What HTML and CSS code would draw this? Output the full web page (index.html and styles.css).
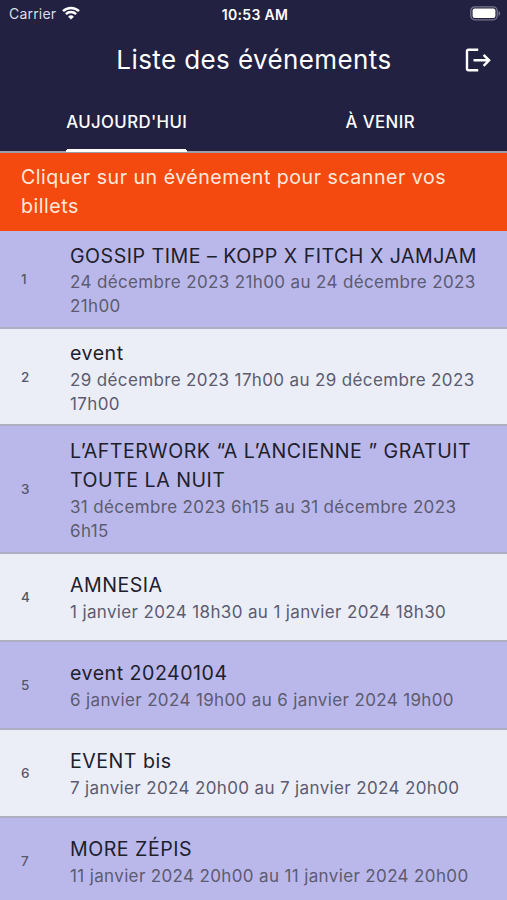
FILE: index.html
```html
<!DOCTYPE html>
<html lang="fr">
<head>
    <meta charset="UTF-8">
    <meta name="viewport" content="width=device-width, initial-scale=1.0">
    <title>Liste des événements</title>
    <link rel="stylesheet" href="styles.css">
</head>
<body>
    <header class="header">
        <div class="status-bar">
            <div class="carrier">
                <span>Carrier</span>
                <svg class="wifi" viewBox="0 0 18 14" width="18" height="14">
                    <path d="M1 5.2a11.5 11.5 0 0 1 16 0M3.9 8.2a7.3 7.3 0 0 1 10.2 0" fill="none" stroke="#fff" stroke-width="2.5"/>
                    <path d="M9 13.6 6.1 10.7a4.2 4.2 0 0 1 5.8 0z" fill="#fff"/>
                </svg>
            </div>
            <span class="time">10:53 AM</span>
            <svg class="battery" viewBox="0 0 31 15" width="31" height="15">
                <rect x="0.8" y="0.8" width="26.4" height="13" rx="4" fill="none" stroke="#77768a" stroke-width="1.3"/>
                <rect x="2.6" y="2.6" width="22.8" height="9.4" rx="2" fill="#fff"/>
                <path d="M28.6 5v4.8c2.1-.8 2.1-4 0-4.8z" fill="#77768a"/>
            </svg>
        </div>
        <div class="app-bar">
            <h1>Liste des événements</h1>
            <a href="#" class="logout" aria-label="Déconnexion">
                <svg viewBox="0 0 26 24" width="26" height="24" fill="none" stroke="#fff" stroke-width="2.4">
                    <path d="M13.2 1.7H3.5a1.5 1.5 0 0 0-1.5 1.5v17.6a1.5 1.5 0 0 0 1.5 1.5h9.7M8.5 12.3h15.2M18.6 6.8l5.5 5.5-5.5 5.5"/>
                </svg>
            </a>
        </div>
        <nav class="tabs">
            <a href="#" class="tab active"><span>AUJOURD'HUI</span></a>
            <a href="#" class="tab"><span>À VENIR</span></a>
        </nav>
    </header>
    <p class="banner">Cliquer sur un événement pour scanner vos billets</p>
    <ul class="events">
        <li class="event">
            <span class="number">1</span>
            <div class="info">
                <h2>GOSSIP TIME – KOPP X FITCH X JAMJAM</h2>
                <p>24 décembre 2023 21h00 au 24 décembre 2023 21h00</p>
            </div>
        </li>
        <li class="event">
            <span class="number">2</span>
            <div class="info">
                <h2>event</h2>
                <p>29 décembre 2023 17h00 au 29 décembre 2023 17h00</p>
            </div>
        </li>
        <li class="event">
            <span class="number">3</span>
            <div class="info">
                <h2>L’AFTERWORK “A L’ANCIENNE ” GRATUIT TOUTE LA NUIT</h2>
                <p>31 décembre 2023 6h15 au 31 décembre 2023 6h15</p>
            </div>
        </li>
        <li class="event">
            <span class="number">4</span>
            <div class="info">
                <h2>AMNESIA</h2>
                <p>1 janvier 2024 18h30 au 1 janvier 2024 18h30</p>
            </div>
        </li>
        <li class="event">
            <span class="number">5</span>
            <div class="info">
                <h2>event 20240104</h2>
                <p>6 janvier 2024 19h00 au 6 janvier 2024 19h00</p>
            </div>
        </li>
        <li class="event">
            <span class="number">6</span>
            <div class="info">
                <h2>EVENT bis</h2>
                <p>7 janvier 2024 20h00 au 7 janvier 2024 20h00</p>
            </div>
        </li>
        <li class="event">
            <span class="number">7</span>
            <div class="info">
                <h2>MORE ZÉPIS</h2>
                <p>11 janvier 2024 20h00 au 11 janvier 2024 20h00</p>
            </div>
        </li>
    </ul>
</body>
</html>
```

FILE: styles.css
```css
* {
    box-sizing: border-box;
}
body {
    font-family: Inter, "Liberation Sans", sans-serif;
    margin: 0;
    height: 900px;
    overflow: hidden;
    background-color: #ebeef7;
}
h1, h2, p, ul {
    margin: 0;
    padding: 0;
    font-weight: 400;
}
.header {
    height: 153px;
    background-color: #222142;
    border-bottom: 2px solid #a09bab;
    color: white;
}
.status-bar {
    display: grid;
    grid-template-columns: 1fr auto 1fr;
    align-items: center;
    height: 28px;
    padding: 0 6px 0 9px;
    font-size: 14px;
}
.carrier {
    display: flex;
    align-items: center;
    gap: 6px;
    margin-top: -1px;
    color: #dddde6;
    letter-spacing: 0.2px;
}
.wifi {
    margin-top: -1px;
}
.time {
    font-weight: 600;
    font-size: 14px;
    letter-spacing: 0.3px;
}
.battery {
    justify-self: end;
    margin-top: -2px;
}
.app-bar {
    display: grid;
    grid-template-columns: 1fr auto 1fr;
    align-items: center;
    height: 64px;
}
.app-bar h1 {
    grid-column: 2;
    padding-left: 1px;
    font-size: 26px;
    line-height: 34px;
    letter-spacing: 0.4px;
}
.logout {
    justify-self: end;
    height: 24px;
    margin-right: 16px;
}
.tabs {
    display: flex;
    height: 59px;
}
.tab {
    flex: 1;
    display: flex;
    justify-content: center;
    color: white;
    font-size: 16.8px;
    font-weight: 500;
    line-height: 60px;
    letter-spacing: 0.4px;
    text-decoration: none;
}
.tab.active span {
    margin-bottom: -1px;
    background: linear-gradient(white, white) bottom / calc(100% - 2px) 3px no-repeat,
        linear-gradient(white, white) bottom / 100% 2px no-repeat;
}
.banner {
    height: 78px;
    padding: 10px 21px;
    background-color: #f4490f;
    color: #ffe9dc;
    font-size: 19.6px;
    line-height: 29.4px;
    letter-spacing: 0.5px;
}
.events {
    list-style: none;
}
.event {
    display: flex;
    align-items: center;
    min-height: 88px;
    padding: 10.5px 21px 8px;
    border-bottom: 2px solid #aeadc2;
    background-color: #ebeef7;
}
.event:nth-child(odd) {
    background-color: #bab8eb;
}
.number {
    width: 49px;
    margin-top: -2px;
    color: #56566a;
    font-size: 13.5px;
    font-weight: 500;
}
.info {
    flex: 1;
}
.info h2 {
    color: #20202c;
    font-size: 19.6px;
    line-height: 29.4px;
    letter-spacing: 0.5px;
}
.info p {
    margin-top: -1px;
    color: #5c5b70;
    font-size: 17px;
    line-height: 24.4px;
    letter-spacing: 0.36px;
}
```
